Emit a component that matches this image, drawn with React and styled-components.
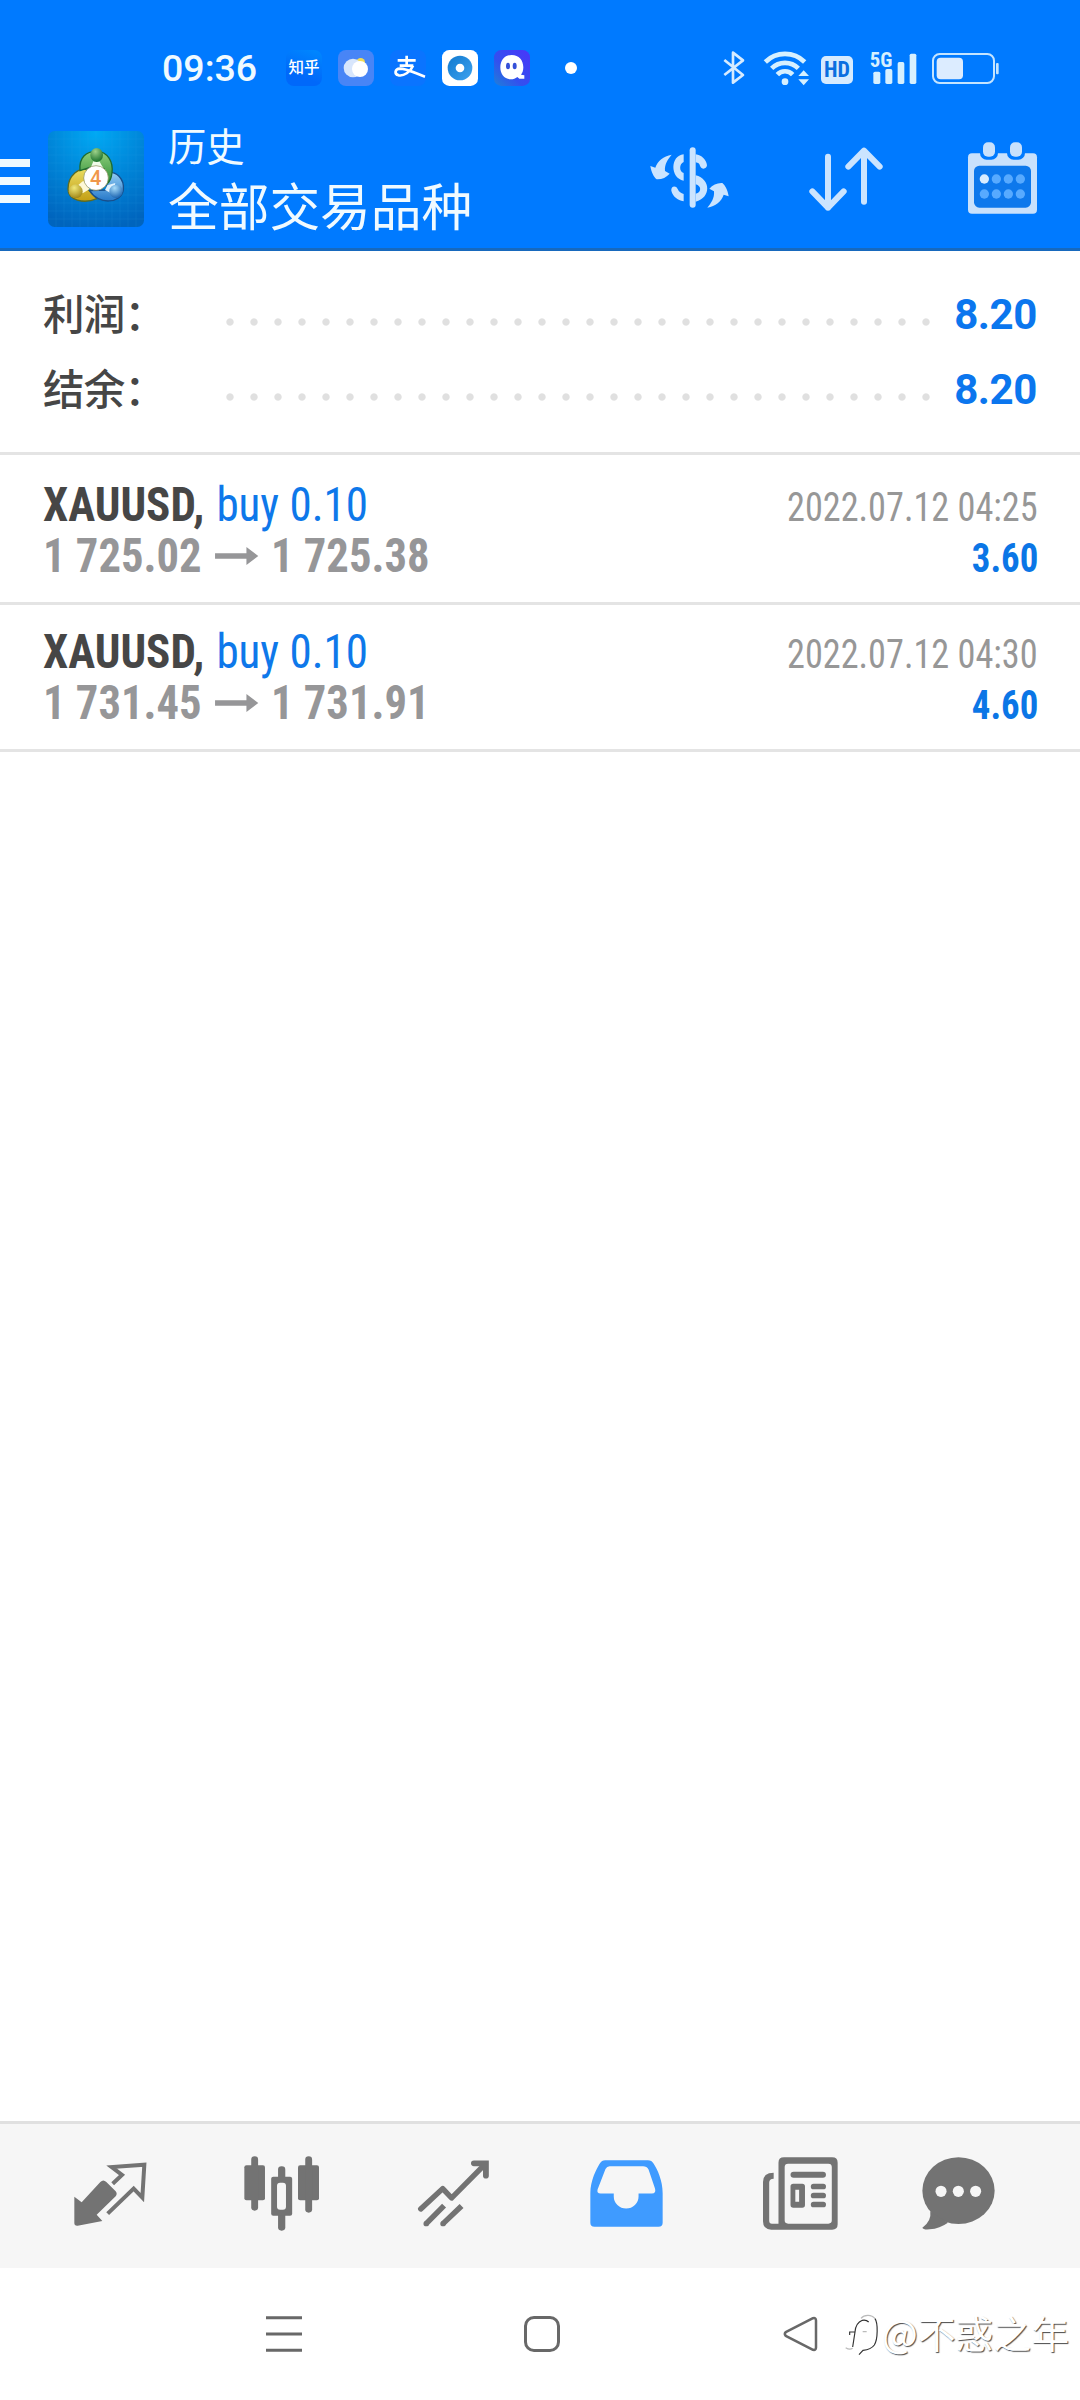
import React from 'react';
import styled, { createGlobalStyle } from 'styled-components';

const blue = '#007aff';
const sans = "Roboto, 'Noto Sans CJK SC', sans-serif";
const condensed = "'Roboto Condensed', 'Noto Sans CJK SC', sans-serif";

const GlobalStyle = createGlobalStyle`
  * { box-sizing: border-box; }
  body { margin: 0; background: #fff; font-family: ${sans}; }
  svg { display: block; flex: none; overflow: visible; }
`;

const Screen = styled.div`
  display: flex;
  flex-direction: column;
  width: 1080px;
  height: 2400px;
  background: #fff;
  overflow: hidden;
`;

const Header = styled.header`
  height: 251px;
  background: ${blue};
  border-bottom: 3px solid #1769bd;
  color: #f0faff;
`;

const StatusBar = styled.div`
  display: flex;
  align-items: center;
  height: 121px;
  padding: 15px 81px 0 162px;
`;

const Clock = styled.span`
  width: 124px;
  font-size: 37.5px;
  font-weight: 500;
  line-height: 44px;
`;

const AppIcons = styled.div`
  display: flex;
  align-items: center;
  gap: 16px;
`;

const ZhihuIcon = styled.span`
  display: grid;
  place-items: center;
  width: 36px;
  height: 36px;
  border-radius: 8px;
  background: linear-gradient(200deg, #0089ff, #0068fa 70%);
  font-size: 15.5px;
  font-weight: 500;
  line-height: 36px;
  color: #fff;
`;

const MoreDot = styled.span`
  width: 12px;
  height: 12px;
  margin-left: 35px;
  border-radius: 50%;
  background: #fff;
`;

const SystemIcons = styled.div`
  display: flex;
  align-items: center;
  margin-left: auto;
`;

const StatusItem = styled.span`
  margin-right: ${p => p.$gap}px;
`;

const HdBadge = styled.span`
  width: 32px;
  height: 28px;
  margin: 3px 17px 0 0;
  border-radius: 5px;
  background: #d6ebff;
  color: #0b6fe0;
  font: 700 22px/28px ${condensed};
  text-align: center;
`;

const Toolbar = styled.div`
  display: flex;
  align-items: flex-start;
  padding-right: 43px;
`;

const MenuButton = styled.div`
  display: flex;
  flex-direction: column;
  gap: 10px;
  width: 30px;
  margin: 38px 18px 0 0;
`;

const MenuBar = styled.span`
  height: 8px;
  background: #f0faff;
`;

const LogoBox = styled.div`
  margin: 10px 24px 0 0;
`;

const Titles = styled.div`
  display: flex;
  flex-direction: column;
  flex: 1;
`;

const Subtitle = styled.span`
  font-size: 38.3px;
  line-height: 54px;
`;

const Title = styled.h1`
  margin: 1px 0 0;
  font-size: 50.7px;
  font-weight: 400;
  line-height: 66px;
`;

const Actions = styled.div`
  display: flex;
  align-items: flex-start;
  padding-top: 20px;
`;

const Action = styled.div`
  padding-top: ${p => p.$top}px;
  margin-left: ${p => p.$gap}px;
`;

const Summary = styled.section`
  padding: 26px 43px 25px;
  border-bottom: 3px solid #e4e4e4;
`;

const SummaryRow = styled.div`
  display: flex;
  height: 75px;
  font-size: 42px;
  line-height: 75px;
`;

const SummaryLabel = styled.span`
  width: 175px;
  padding-top: 1px;
  font-size: 41.5px;
  font-weight: 500;
  letter-spacing: -0.8px;
  color: #464646;
`;

const Leader = styled.span`
  width: 720px;
  background: radial-gradient(circle at 12px 45px, #e0e0e0 3.2px, transparent 4.1px) 0 0 / 24px 75px;
`;

const SummaryValue = styled.span`
  flex: 1;
  text-align: right;
  font-weight: 700;
  letter-spacing: -0.4px;
  color: #0b76ee;
`;

const Deals = styled.section`
  display: flex;
  flex-direction: column;
  flex: 1;
`;

const Deal = styled.article`
  padding: 21px 42px 21px 42.5px;
  height: 147px;
  border-bottom: 3px solid #e4e4e4;
  font-family: ${condensed};
  &:first-child { height: 150px; padding-top: 24px; }
`;

const DealLine = styled.div`
  display: flex;
  align-items: baseline;
  justify-content: space-between;
  height: 51px;
  font-size: 48px;
  line-height: 51px;
  white-space: pre;
`;

const Lead = styled.div`
  display: flex;
  align-items: baseline;
  transform: scaleX(${p => p.$squeeze});
  transform-origin: left;
`;

const Symbol = styled.span`
  font-weight: 700;
  color: #464646;
`;

const Side = styled.span`
  margin-left: 13px;
  color: #0e78ea;
`;

const Price = styled.span`
  font-weight: 700;
  color: #969698;
`;

const ArrowBox = styled.span`
  align-self: center;
  margin: 0 13.5px 0 14.5px;
`;

const DealTime = styled.span`
  font-size: 40px;
  color: #979797;
  transform: scaleX(0.906);
  transform-origin: right;
`;

const DealProfit = styled.span`
  font-size: 40px;
  font-weight: 700;
  color: #0b76e6;
  transform: scaleX(0.92);
  transform-origin: right;
`;

const TabBar = styled.nav`
  display: grid;
  grid-template-columns: 172px 171px 172px 174px 174px 142px;
  height: 147px;
  padding-left: 24px;
  border-top: 3px solid #e0e0e0;
  background: #f6f6f6;
`;

const Tab = styled.div`
  display: flex;
  justify-content: center;
  padding-top: ${p => p.$top}px;
  color: ${p => (p.$active ? '#3f9bff' : '#737373')};
`;

const SystemNav = styled.div`
  display: flex;
  align-items: center;
  height: 132px;
  padding-left: 266px;
  color: #686868;
`;

const NavItem = styled.div`
  margin-right: ${p => p.$gap}px;
`;

const HomeSquare = styled.div`
  width: 36px;
  height: 36px;
  border: 3px solid #686868;
  border-radius: 10px;
`;

const Watermark = styled.span`
  margin: 0 0 4px 3px;
  font: 400 37.8px/50px 'Noto Sans CJK SC', sans-serif;
  color: #fff;
  text-shadow: 1px 1px 1px #4a4a4a;
  white-space: nowrap;
`;

const WeatherIcon = () => (
  <svg width="36" height="36" viewBox="174 20 108 108">
    <rect x="174" y="20" width="108" height="108" rx="24" fill="#4885f6" />
    <circle cx="242" cy="57" r="13" fill="#f2dc55" />
    <circle cx="219" cy="74" r="28" fill="#d8e6fc" />
    <circle cx="240" cy="77" r="24" fill="#fff" />
  </svg>
);

const PayIcon = () => (
  <svg width="36" height="36" viewBox="333 20 108 108" fill="none" stroke="#fff" strokeWidth="8">
    <rect x="333" y="20" width="108" height="108" rx="24" fill="#0a74ff" stroke="none" />
    <path d="M356 51H410M383 37V65M362 67H403" />
    <path d="M402 67C394 86 374 99 359 96C345 92 347 77 363 76C385 76 408 90 438 100" />
  </svg>
);

const LensIcon = () => (
  <svg width="36" height="36" viewBox="486 20 108 108">
    <defs>
      <linearGradient id="lens" x1="0" y1="0" x2="1" y2="1">
        <stop offset="0" stopColor="#1179cf" />
        <stop offset="1" stopColor="#3ca2ef" />
      </linearGradient>
    </defs>
    <rect x="486" y="20" width="108" height="108" rx="22" fill="#fff" />
    <circle cx="540" cy="74" r="37" fill="url(#lens)" />
    <circle cx="540" cy="74" r="13" fill="#fff" />
  </svg>
);

const GhostIcon = () => (
  <svg width="36" height="36" viewBox="642 20 108 108">
    <defs>
      <linearGradient id="ghost" x1="0" y1="1" x2="1" y2="0">
        <stop offset="0" stopColor="#1f80d8" />
        <stop offset=".4" stopColor="#3250ef" />
        <stop offset="1" stopColor="#4a35fa" />
      </linearGradient>
    </defs>
    <rect x="642" y="20" width="108" height="108" rx="22" fill="url(#ghost)" />
    <path d="M695 35C717 35 730 51 730 72C730 82 727 90 723 94L733 96V106H718L712 101C706 106 700 108 693 108C673 108 661 93 661 72C661 51 674 35 695 35Z" fill="#fff" />
    <ellipse cx="684" cy="68" rx="6" ry="10" fill="#3550d8" />
    <ellipse cx="704" cy="68" rx="6" ry="10" fill="#3550d8" />
  </svg>
);

const BluetoothIcon = () => (
  <svg width="22" height="36" viewBox="370 64 66 108" fill="none" stroke="#d6ebff" strokeWidth="8" strokeLinejoin="round">
    <path d="M374 94L430 139L400 162V72L430 95L374 139" />
  </svg>
);

const WifiIcon = () => (
  <svg width="46" height="36" viewBox="490 60 138 108" fill="none" stroke="#d6f0ff" strokeWidth="14">
    <path d="M494 96A84 84 0 0 1 612 96M513 115A57 57 0 0 1 593 115M530 134A31 31 0 0 1 576 134" />
    <g fill="#d6f0ff" stroke="none">
      <circle cx="553" cy="155" r="10" />
      <path d="M593 138L609 121L625 138ZM593 148H625L609 166Z" />
    </g>
  </svg>
);

const SignalIcon = () => (
  <svg width="47" height="36" viewBox="809 60 141 108" fill="#d6f0ff">
    <text x="808" y="110" fontFamily="Roboto Condensed" fontWeight="700" fontSize="61" textLength="68" lengthAdjust="spacingAndGlyphs">5G</text>
    <rect x="819" y="125" width="21" height="37" rx="5" />
    <rect x="855" y="117" width="21" height="45" rx="5" />
    <rect x="892" y="96" width="20" height="66" rx="5" />
    <rect x="928" y="71" width="20" height="91" rx="5" />
  </svg>
);

const BatteryIcon = () => (
  <svg width="67" height="36" viewBox="996 60 201 108">
    <rect x="999" y="72" width="183" height="87" rx="20" fill="none" stroke="#c4e4ff" strokeWidth="6" />
    <rect x="1010" y="83" width="79" height="65" rx="12" fill="#dcecff" />
    <rect x="1188" y="99" width="8" height="34" rx="3" fill="#c4e4ff" />
  </svg>
);

const Logo = () => (
  <svg width="96" height="96" viewBox="54 63 288 288">
    <defs>
      <radialGradient id="sky" cx=".5" cy=".02" r="1">
        <stop offset="0" stopColor="#00a9f4" />
        <stop offset=".5" stopColor="#0085d8" />
        <stop offset="1" stopColor="#0064bd" />
      </radialGradient>
      <linearGradient id="green" x1="0" y1="0" x2="0" y2="1">
        <stop offset="0" stopColor="#8fcf7c" />
        <stop offset="1" stopColor="#2c8b35" />
      </linearGradient>
      <linearGradient id="yellow" x1="0" y1="0" x2="0" y2="1">
        <stop offset="0" stopColor="#e9dc62" />
        <stop offset="1" stopColor="#c39e14" />
      </linearGradient>
      <linearGradient id="azure" x1="0" y1="0" x2="0" y2="1">
        <stop offset="0" stopColor="#93cdf3" />
        <stop offset="1" stopColor="#2678c9" />
      </linearGradient>
      <radialGradient id="ballGreen" cx=".4" cy=".25" r=".8">
        <stop offset="0" stopColor="#9ed28a" />
        <stop offset="1" stopColor="#146c27" />
      </radialGradient>
      <radialGradient id="ballYellow" cx=".4" cy=".25" r=".8">
        <stop offset="0" stopColor="#f1e878" />
        <stop offset="1" stopColor="#9c8113" />
      </radialGradient>
      <radialGradient id="ballBlue" cx=".4" cy=".25" r=".8">
        <stop offset="0" stopColor="#a7dcfa" />
        <stop offset="1" stopColor="#155fae" />
      </radialGradient>
    </defs>
    <rect x="54" y="63" width="288" height="288" rx="20" fill="url(#sky)" />
    <path d="M78 63V351M102 63V351M126 63V351M150 63V351M174 63V351M198 63V351M222 63V351M246 63V351M270 63V351M294 63V351M318 63V351M54 87H342M54 111H342M54 135H342M54 159H342M54 183H342M54 207H342M54 231H342M54 255H342M54 279H342M54 303H342M54 327H342" stroke="#39b4ea" strokeOpacity=".18" strokeWidth="2" />
    <g strokeWidth="4">
      <path d="M170 179C150 172 114 194 114 237C114 270 160 283 201 266L176 240Z" fill="url(#yellow)" stroke="#5d6b22" />
      <path d="M232 188C257 182 284 205 280 240C274 281 205 286 179 242L230 240Z" fill="url(#azure)" stroke="#174f8c" />
      <path d="M150 182C146 142 169 124 199 124C234 124 250 157 246 188C244 206 237 218 230 222L222 176L180 172Z" fill="url(#green)" stroke="#1d6b31" />
    </g>
    <path d="M182 174L190 154H208L222 178Z" fill="#effbe9" />
    <path d="M160 212L142 227L158 250L179 237Z" fill="#fdf8d7" />
    <path d="M232 226L256 219L248 252L225 240Z" fill="#dff2ff" />
    <ellipse cx="200" cy="135" rx="19" ry="21" fill="url(#ballGreen)" />
    <circle cx="137" cy="244" r="21" fill="url(#ballYellow)" />
    <circle cx="258" cy="244" r="20" fill="url(#ballBlue)" />
    <circle cx="198" cy="204" r="37" fill="#fff" stroke="#858a50" strokeWidth="2" />
    <text x="197" y="225" textAnchor="middle" fontFamily="Roboto" fontWeight="500" fontSize="60" fill="#f0974a">4</text>
  </svg>
);

const DollarIcon = () => (
  <svg width="79" height="61" viewBox="151 349 237 183" fill="#cbe4ff">
    <rect x="270" y="350" width="18" height="181" rx="9" />
    <path d="M252 371C211 375 211 443 252 450V427C238 423 238 400 252 394Z" />
    <path d="M288 371C306 374 320 386 322 404C320 417 305 417 301 405C299 399 296 396 288 395Z" />
    <path d="M288 434C334 445 335 502 288 513V489C306 486 306 465 288 461Z" />
    <path d="M215 480C213 466 229 463 234 475C238 484 244 488 252 490V512C233 508 220 498 215 480Z" />
    <path id="swing" d="M216 372C191 376 174 391 167 411L152 406C155 425 163 440 171 446C186 447 200 440 210 429L196 421C194 400 205 385 216 372Z" />
    <use href="#swing" transform="rotate(180 269.5 451.5)" />
  </svg>
);

const SortIcon = () => (
  <svg width="74" height="64" viewBox="627 349 222 192" fill="none" stroke="#cbe4ff" strokeWidth="18" strokeLinecap="round" strokeLinejoin="round">
    <path d="M684 378V531M637 482L684 531L731 482M792 513V360M745 408L792 360L839 408" />
  </svg>
);

const CalendarIcon = () => (
  <svg width="69" height="72" viewBox="1104 334 207 216">
    <rect x="1104" y="368" width="207" height="181" rx="12" fill="#c9e1fc" />
    <rect x="1140" y="330" width="54" height="57" rx="20" fill={blue} />
    <rect x="1221" y="330" width="54" height="57" rx="20" fill={blue} />
    <rect x="1149" y="335" width="36" height="43" rx="15" fill="#c9e1fc" />
    <rect x="1230" y="335" width="36" height="43" rx="15" fill="#c9e1fc" />
    <rect x="1122" y="405" width="171" height="126" rx="16" fill="#0d78ec" />
    {[445, 490].map(y => [1153, 1189, 1225, 1261].map(x => (
      <circle key={`${x}-${y}`} cx={x} cy={y} r="14" fill={x === 1153 && y === 445 ? '#d8ecff' : '#57aaff'} />
    )))}
  </svg>
);

const PriceArrow = () => (
  <svg width="46.5" height="18" viewBox="624 293 124 54" preserveAspectRatio="none" fill="#969698">
    <path d="M624 312H714V293L748 320L714 347V328H624Z" />
  </svg>
);

const TradeIcon = () => (
  <svg width="73" height="64" viewBox="41 37 219 192">
    <path d="M42 141L64 158L120 97Q129 88 138 97L166 125Q172 132 166 140L109 195L126 214L52 228Q42 229 42 220Z" fill="currentColor" />
    <path d="M157 102L185 76L154 52L252 45L246 144L220 117L142 192" fill="none" stroke="currentColor" strokeWidth="12" />
  </svg>
);

const CandlesIcon = () => (
  <svg width="75" height="75" viewBox="708 169 218 225" preserveAspectRatio="none" fill="currentColor">
    <rect x="709" y="197" width="60" height="105" rx="6" />
    <rect x="729" y="170" width="20" height="163" rx="10" />
    <rect x="865" y="197" width="61" height="105" rx="6" />
    <rect x="886" y="170" width="20" height="169" rx="10" />
    <rect x="807" y="200" width="21" height="193" rx="10" />
    <rect x="787" y="231" width="61" height="117" rx="6" />
    <rect x="804" y="249" width="26" height="81" rx="9" fill="#f6f6f6" />
  </svg>
);

const TrendIcon = () => (
  <svg width="71" height="67" viewBox="1213 179 207 201" preserveAspectRatio="none" fill="none" stroke="currentColor" strokeWidth="16">
    <path d="M1221 326L1285 265L1311 293L1408 192" strokeLinecap="round" strokeLinejoin="round" />
    <path d="M1376 189H1411V226" strokeWidth="17" strokeLinecap="round" />
    <path d="M1237 370L1289 316M1286 370L1340 317" />
    <g fill="currentColor" stroke="none">
      <circle cx="1237" cy="370" r="8" />
      <circle cx="1286" cy="370" r="8" />
    </g>
  </svg>
);

const InboxIcon = () => (
  <svg width="73" height="67" viewBox="146 179 212 200" preserveAspectRatio="none" fill="currentColor" fillRule="evenodd">
    <path d="M147 278C147 240 165 205 174 190Q180 180 190 180H314Q325 180 331 190C342 208 357 240 357 278V366Q357 378 345 378H159Q147 378 147 366ZM203 198H300Q311 198 316 207L335 265Q338 279 326 279H287V288A36 36 0 0 1 215 288V279H177Q165 279 168 267L191 206Q195 198 203 198Z" />
  </svg>
);

const NewsIcon = () => (
  <svg width="75" height="73" viewBox="646 169 218 219" preserveAspectRatio="none" fill="currentColor">
    <path fillRule="evenodd" d="M707 170H847Q863 170 863 186V371Q863 387 847 387H670Q646 387 646 362V244Q646 216 677 216V234Q664 234 664 246V360Q664 369 672 369H691V186Q691 170 707 170ZM719 189Q709 189 709 199V359Q709 369 719 369H836Q846 369 846 359V199Q846 189 836 189Z" />
    <rect x="726" y="213" width="103" height="18" rx="9" />
    <path fillRule="evenodd" d="M734 249H760Q768 249 768 257V313Q768 321 760 321H734Q726 321 726 313V257Q726 249 734 249ZM740 267V303H751V267Z" />
    <rect x="785" y="249" width="44" height="17" rx="8" />
    <rect x="785" y="276" width="44" height="17" rx="8" />
    <rect x="785" y="303" width="44" height="17" rx="8" />
  </svg>
);

const ChatIcon = () => (
  <svg width="73" height="73" viewBox="1108 169 211 219" preserveAspectRatio="none" fill="currentColor">
    <ellipse cx="1213.5" cy="270" rx="104.5" ry="100" />
    <path d="M1132 332Q1136 362 1109 381Q1112 388 1130 386Q1160 383 1183 366Z" />
    {[1163, 1213, 1263].map(x => (
      <ellipse key={x} cx={x} cy="272" rx="16" ry="17" fill="#f6f6f6" />
    ))}
  </svg>
);

const RecentsIcon = () => (
  <svg width="36" height="36" viewBox="0 0 36 36" stroke="currentColor" strokeWidth="3">
    <path d="M0 1.7H36M0 18H36M0 34.3H36" />
  </svg>
);

const BackIcon = () => (
  <svg width="35" height="36" viewBox="0 0 35 36" fill="none" stroke="currentColor" strokeWidth="2.5" strokeLinejoin="round">
    <path d="M30 2.2L2.7 16.2Q1 18 2.7 19.8L30 33.8Q33 34.5 33 31.5V4.5Q33 1.5 30 2.2Z" />
  </svg>
);

const WatermarkMark = () => (
  <svg width="34" height="42" viewBox="12 62 102 126" fill="none" stroke="#333" strokeWidth="3.5">
    <path d="M26 128V119H42Q44 92 64 84Q76 82 83 89M42 119L35 164" />
    <path d="M35 168Q26 174 14 166M65 118H77M60 78C70 66 92 66 102 79" stroke="#bbb" />
    <path d="M102 79C111 92 111 140 100 158Q90 172 66 174L54 187" />
  </svg>
);

const totals = [
  { label: '利润：', value: '8.20' },
  { label: '结余：', value: '8.20' },
];

const deals = [
  { symbol: 'XAUUSD,', side: 'buy 0.10', open: '1 725.02', close: '1 725.38', time: '2022.07.12 04:25', profit: '3.60' },
  { symbol: 'XAUUSD,', side: 'buy 0.10', open: '1 731.45', close: '1 731.91', time: '2022.07.12 04:30', profit: '4.60' },
];

const tabs = [
  { id: 'trade', Icon: TradeIcon, top: 38 },
  { id: 'quotes', Icon: CandlesIcon, top: 32 },
  { id: 'charts', Icon: TrendIcon, top: 35.5 },
  { id: 'history', Icon: InboxIcon, top: 35.5, active: true },
  { id: 'news', Icon: NewsIcon, top: 32.5 },
  { id: 'chat', Icon: ChatIcon, top: 32.5 },
];

export default function App() {
  return (
    <Screen>
      <GlobalStyle />
      <Header>
        <StatusBar>
          <Clock>09:36</Clock>
          <AppIcons>
            <ZhihuIcon>知乎</ZhihuIcon>
            <WeatherIcon />
            <PayIcon />
            <LensIcon />
            <GhostIcon />
          </AppIcons>
          <MoreDot />
          <SystemIcons>
            <StatusItem $gap={19}><BluetoothIcon /></StatusItem>
            <StatusItem $gap={11}><WifiIcon /></StatusItem>
            <HdBadge>HD</HdBadge>
            <StatusItem $gap={15}><SignalIcon /></StatusItem>
            <StatusItem $gap={0}><BatteryIcon /></StatusItem>
          </SystemIcons>
        </StatusBar>
        <Toolbar>
          <MenuButton><MenuBar /><MenuBar /><MenuBar /></MenuButton>
          <LogoBox><Logo /></LogoBox>
          <Titles>
            <Subtitle>历史</Subtitle>
            <Title>全部交易品种</Title>
          </Titles>
          <Actions>
            <Action $top={5.5} $gap={0}><DollarIcon /></Action>
            <Action $top={5.5} $gap={80}><SortIcon /></Action>
            <Action $top={0.5} $gap={85}><CalendarIcon /></Action>
          </Actions>
        </Toolbar>
      </Header>
      <Summary>
        {totals.map(t => (
          <SummaryRow key={t.label}>
            <SummaryLabel>{t.label}</SummaryLabel>
            <Leader />
            <SummaryValue>{t.value}</SummaryValue>
          </SummaryRow>
        ))}
      </Summary>
      <Deals>
        {deals.map(d => (
          <Deal key={d.time}>
            <DealLine>
              <Lead $squeeze={0.938}>
                <Symbol>{d.symbol}</Symbol>
                <Side>{d.side}</Side>
              </Lead>
              <DealTime>{d.time}</DealTime>
            </DealLine>
            <DealLine>
              <Lead $squeeze={0.93}>
                <Price>{d.open}</Price>
                <ArrowBox><PriceArrow /></ArrowBox>
                <Price>{d.close}</Price>
              </Lead>
              <DealProfit>{d.profit}</DealProfit>
            </DealLine>
          </Deal>
        ))}
      </Deals>
      <TabBar>
        {tabs.map(({ id, Icon, top, active }) => (
          <Tab key={id} $top={top} $active={active}><Icon /></Tab>
        ))}
      </TabBar>
      <SystemNav>
        <NavItem $gap={222}><RecentsIcon /></NavItem>
        <NavItem $gap={223}><HomeSquare /></NavItem>
        <NavItem $gap={27}><BackIcon /></NavItem>
        <WatermarkMark />
        <Watermark>@不惑之年</Watermark>
      </SystemNav>
    </Screen>
  );
}
